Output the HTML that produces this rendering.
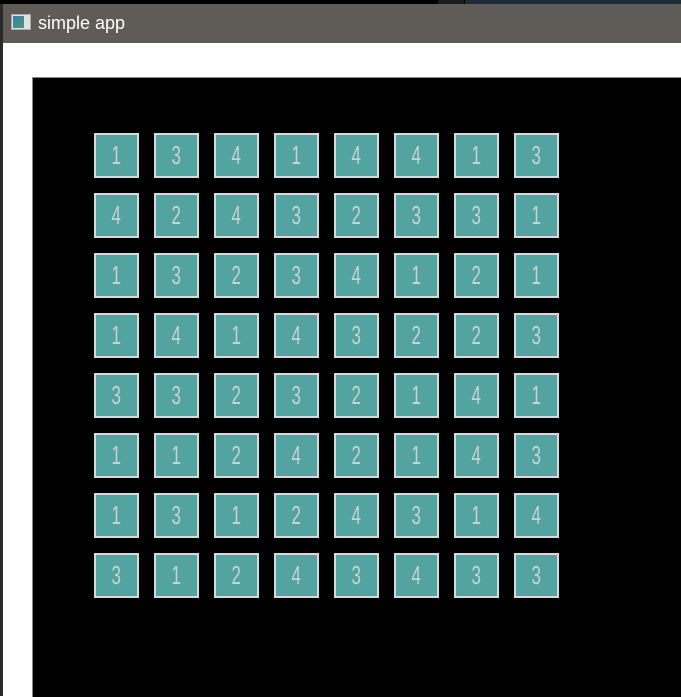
<!DOCTYPE html>
<html><head><style>
body{margin:0;width:681px;height:696px;overflow:hidden;background:#fff;position:relative;font-family:"Liberation Sans",sans-serif}
.top{position:absolute;left:0;top:0;width:681px;height:4px;background:#000}
.top2{position:absolute;left:438px;top:0;width:26px;height:4px;background:#1b1b1b}
.top3{position:absolute;left:465px;top:0;width:216px;height:4px;background:#1c2a3a}
.title{position:absolute;left:3px;top:4px;width:678px;height:39px;background:#5f5b57;color:#fff;font-size:18px;line-height:39px}
.title span{position:absolute;left:35px;top:0}
.icon{position:absolute;left:8px;top:10px;width:20px;height:16px;background:#dfe3e3;border:1px solid #aaa;box-sizing:border-box}
.icon i{position:absolute;left:1px;top:1px;width:11px;height:12px;background:linear-gradient(135deg,#3a7fb0,#4a9a70)}
.lb{position:absolute;left:0;top:4px;width:3px;height:692px;background:#2a2a2a}
.canvas{position:absolute;left:32px;top:77px;width:649px;height:619px;background:#000;border-left:1px solid #888;border-top:1px solid #888}
.t{position:absolute;width:41px;height:41px;border:2px solid #d2dcdc;background:#53a3a0;color:#c9d3d3;font-size:26px;line-height:41px;text-align:center}
.t b{display:inline-block;font-weight:normal;transform:scaleX(0.65)}
</style></head><body>
<div class="top"></div><div class="top2"></div><div class="top3"></div>
<div class="title"><div class="icon"><i></i></div><span>simple app</span></div>
<div class="lb"></div>
<div class="canvas"></div>
<div id="g"></div>
<script>
var d=["13414413","42432331","13234121","14143223","33232141","11242143","13124314","31243433"];
var h="";
for(var j=0;j<8;j++)for(var i=0;i<8;i++)h+='<div class="t" style="left:'+(94+60*i)+'px;top:'+(133+60*j)+'px"><b>'+d[j][i]+'</b></div>';
document.getElementById("g").innerHTML=h;
</script>
</body></html>
